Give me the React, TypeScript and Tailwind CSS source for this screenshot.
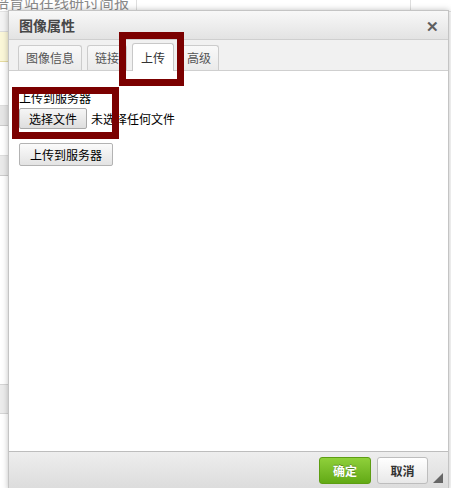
import React from 'react';

const font = { fontFamily: '"Noto Sans CJK SC", "Liberation Sans", sans-serif' };

const tabs = [
  { label: '图像信息', active: false },
  { label: '链接', active: false },
  { label: '上传', active: true },
  { label: '高级', active: false },
];

export default function App() {
  return (
    <div className="relative w-[451px] h-[488px] overflow-hidden bg-white" style={font}>
      {/* page behind the dialog */}
      <div className="absolute left-0 top-0 w-[451px] h-[12px] border-b border-[#e3e3e3]">
        <div className="absolute left-[-6px] top-[-7px] text-[15px] leading-[18px] text-[#8a8a8a] whitespace-nowrap">
          培育站在线研讨简报
        </div>
        <div className="absolute left-[136px] top-0 h-[12px] border-l border-[#dedede]" />
        <div className="absolute left-[410px] top-0 h-[12px] border-l border-[#dedede]" />
      </div>
      <div className="absolute left-0 top-[12px] w-[8px] h-[476px] flex flex-col bg-[#f4f4f4]">
        <div className="h-[20px] border-b border-[#ddd]" />
        <div className="h-[30px] bg-[#fbf7d8] border-b border-[#e6dca0]" />
        <div className="h-[44px] border-b border-[#ddd] bg-white" />
        <div className="h-[20px] bg-[#e6e6e6] border-b border-[#ccc]" />
        <div className="h-[30px] border-b border-[#ddd] bg-white" />
        <div className="h-[20px] bg-[#eaeaea] border-b border-[#ccc]" />
        <div className="h-[208px] bg-white" />
        <div className="h-[30px] bg-[#ececec] border-y border-[#d5d5d5]" />
        <div className="flex-1 bg-white" />
      </div>

      {/* dialog */}
      <div className="absolute left-[8px] top-[10px] w-[441px] h-[480px] flex flex-col border border-[#c4c4c4] bg-white shadow-[0_0_6px_rgba(0,0,0,0.25)]">
        {/* title bar */}
        <div className="h-[29px] shrink-0 flex items-center justify-between px-[10px] bg-gradient-to-b from-[#f8f8f8] to-[#e3e3e3] border-b border-[#cfcfcf]">
          <span className="text-[14px] font-bold text-[#474747]">图像属性</span>
          <span className="text-[15px] leading-none font-black text-[#5f5f5f] mr-[-1px]">✕</span>
        </div>
        {/* tabs */}
        <div className="h-[31px] shrink-0 flex items-end gap-[5px] pl-[9px] bg-[#f1f1f1] border-b border-[#cfcfcf]">
          {tabs.map((t) =>
            t.active ? (
              <div
                key={t.label}
                className="h-[28px] mb-[-1px] px-[8px] flex items-center bg-white border border-b-0 border-[#c8c8c8] rounded-t-[3px] text-[12px] text-[#333]"
              >
                {t.label}
              </div>
            ) : (
              <div
                key={t.label}
                className="h-[25px] px-[7px] flex items-center bg-gradient-to-b from-[#f9f9f9] to-[#eaeaea] border border-b-0 border-[#cccccc] rounded-t-[3px] text-[12px] text-[#555]"
              >
                {t.label}
              </div>
            )
          )}
        </div>
        {/* content */}
        <div className="flex-1 px-[10px] pt-[19px] text-[12px] text-black">
          <div className="leading-[15px]">上传到服务器</div>
          <div className="flex items-center gap-[4px] mt-[3px]">
            <button className="h-[21px] px-[9px] border border-[#a9a9a9] rounded-[2px] bg-gradient-to-b from-[#f6f6f6] to-[#dedede] text-[12px] leading-none text-black">
              选择文件
            </button>
            <span>未选择任何文件</span>
          </div>
          <button className="mt-[14px] h-[23px] px-[10px] border border-[#b3b3b3] rounded-[2px] bg-gradient-to-b from-[#fbfbfb] to-[#e3e3e3] text-[12px] leading-none text-black">
            上传到服务器
          </button>
        </div>
        {/* footer */}
        <div className="h-[38px] shrink-0 flex items-start justify-end gap-[6px] pr-[20px] pt-[5px] bg-gradient-to-b from-[#eeeeee] to-[#dcdcdc] border-t border-[#bdbdbd]">
          <button className="w-[52px] h-[27px] rounded-[3px] border border-[#5d9d12] bg-gradient-to-b from-[#8fd03a] to-[#62aa14] text-[12px] font-bold text-white [text-shadow:0_-1px_0_rgba(0,0,0,0.3)]">
            确定
          </button>
          <button className="w-[51px] h-[27px] rounded-[3px] border border-[#bdbdbd] bg-gradient-to-b from-[#ffffff] to-[#e8e8e8] text-[12px] font-bold text-[#333]">
            取消
          </button>
        </div>
      </div>

      {/* resize grip */}
      <div className="absolute left-[433px] top-[473px] w-0 h-0 border-l-[10px] border-l-transparent border-b-[10px] border-b-[#666]" />

      {/* highlight boxes */}
      <div className="absolute left-[119px] top-[32px] w-[65px] h-[54px] border-[7px] border-[#7b0000]" />
      <div className="absolute left-[12px] top-[87px] w-[107px] h-[52px] border-[7px] border-[#7b0000]" />
    </div>
  );
}
